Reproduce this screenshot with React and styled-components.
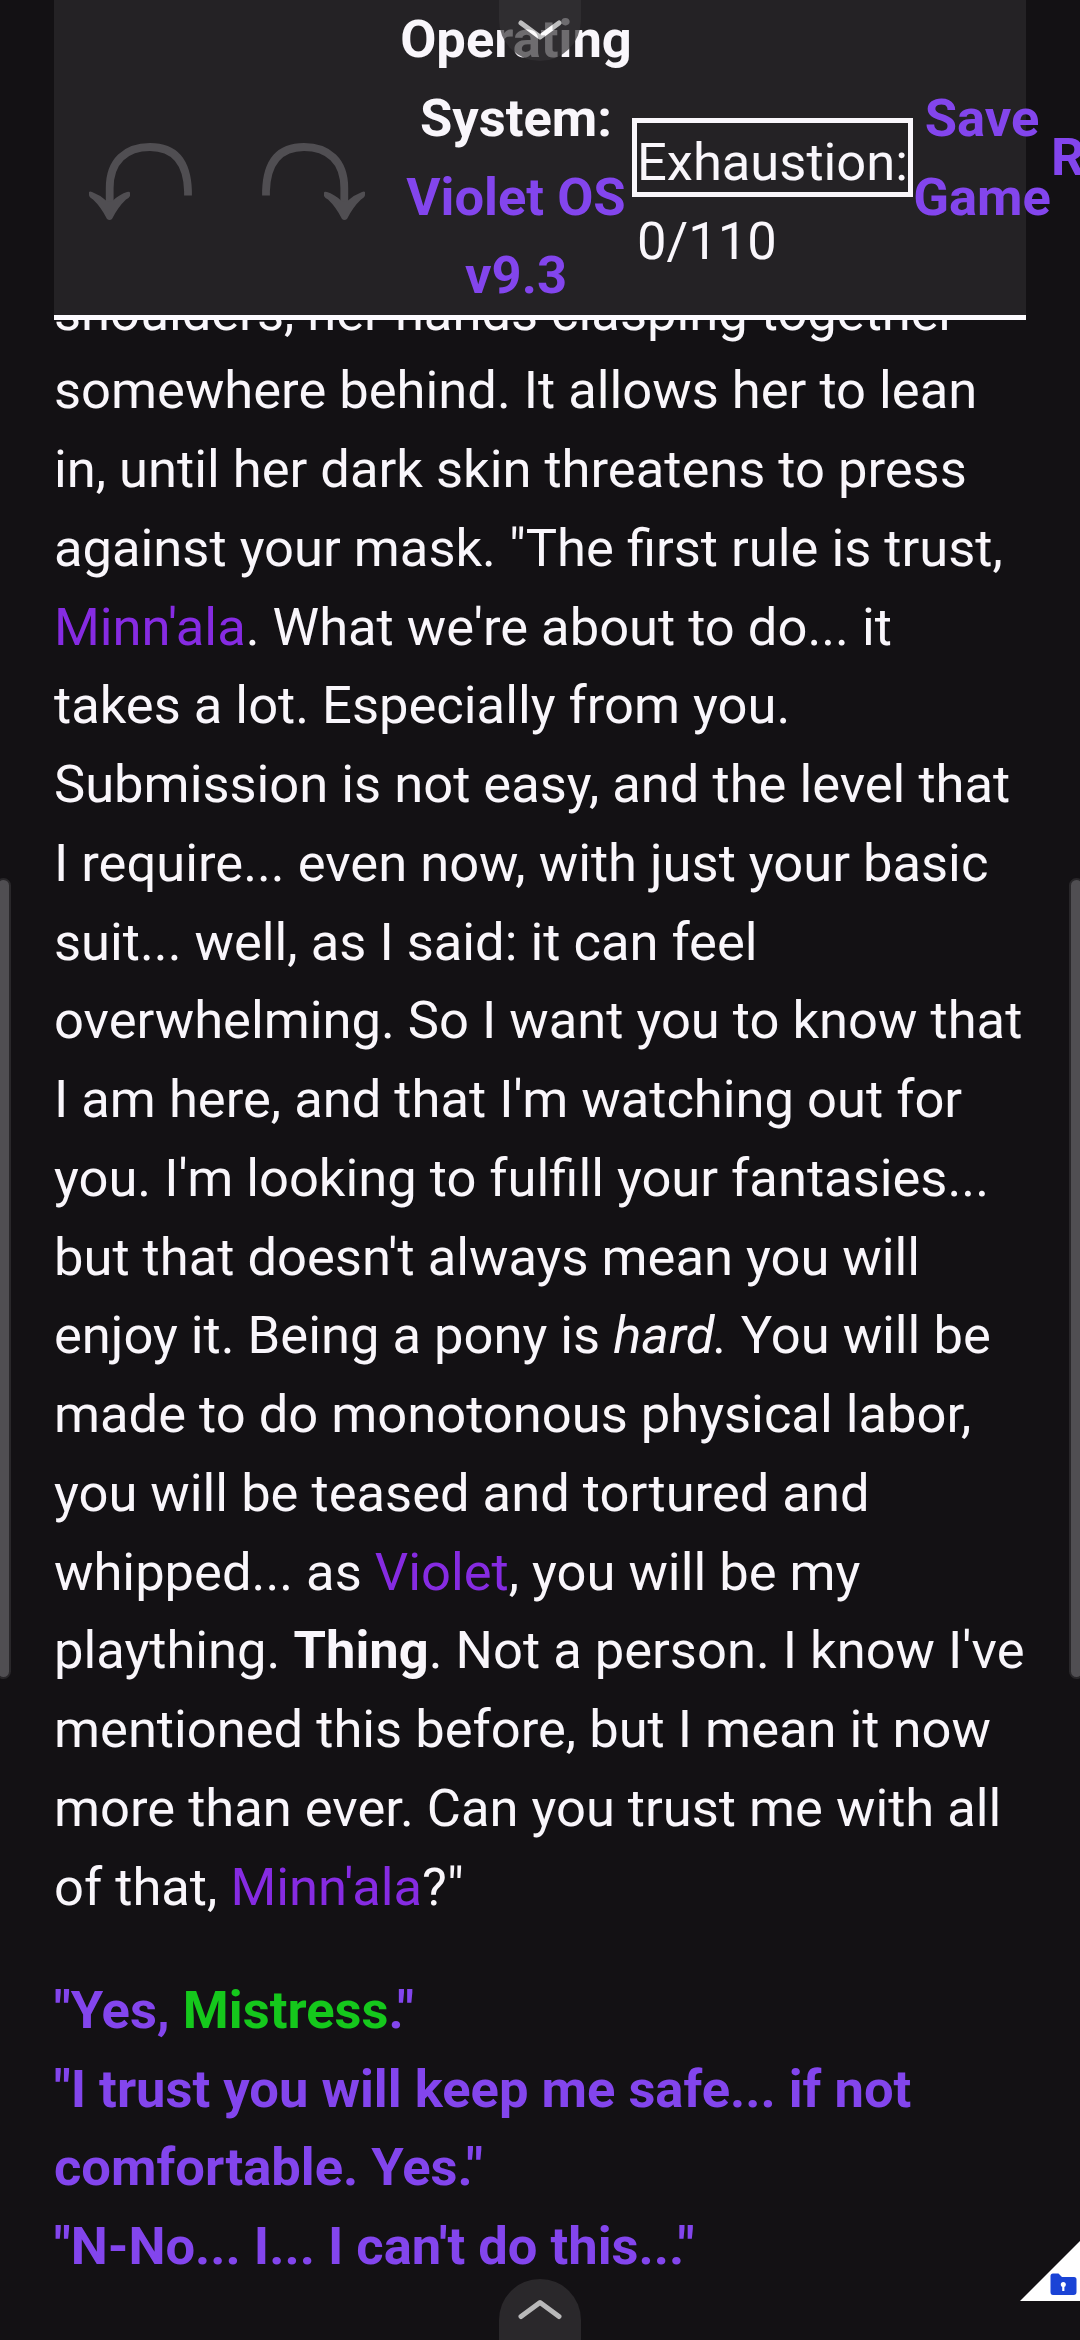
import React from 'react'
import styled, { createGlobalStyle } from 'styled-components'

const App = () => {
   return (
      <>
         <GlobalStyle />
         <ScreenStyled>
            <Header>
               <History>
                  <ArrowIcon />
                  <ArrowIcon $flip />
               </History>
               <SystemTitle>
                  Operating System: <Link>Violet OS v9.3</Link>
               </SystemTitle>
               <Meter>Exhaustion: 0/110</Meter>
               <HeaderLink $width="138px">Save Game</HeaderLink>
               <HeaderLink>Restart</HeaderLink>
            </Header>
            <Story>
               <p>
                  shoulders, her hands clasping together<br />
                  somewhere behind. It allows her to lean<br />
                  in, until her dark skin threatens to press<br />
                  against your mask. "The first rule is trust,<br />
                  <Name>Minn'ala</Name>. What we're about to do... it<br />
                  takes a lot. Especially from you.<br />
                  Submission is not easy, and the level that<br />
                  I require... even now, with just your basic<br />
                  suit... well, as I said: it can feel<br />
                  overwhelming. So I want you to know that<br />
                  I am here, and that I'm watching out for<br />
                  you. I'm looking to fulfill your fantasies...<br />
                  but that doesn't always mean you will<br />
                  enjoy it. Being a pony is <em>hard.</em> You will be<br />
                  made to do monotonous physical labor,<br />
                  you will be teased and tortured and<br />
                  whipped... as <Name>Violet</Name>, you will be my<br />
                  plaything. <strong>Thing</strong>. Not a person. I know I've<br />
                  mentioned this before, but I mean it now<br />
                  more than ever. Can you trust me with all<br />
                  of that, <Name>Minn'ala</Name>?"
               </p>
               <Choices>
                  <Link>"Yes, <Mistress>Mistress</Mistress>."</Link>
                  <Link>"I trust you will keep me safe... if not<br />comfortable. Yes."</Link>
                  <Link>"N-No... I... I can't do this..."</Link>
               </Choices>
            </Story>
            <EdgeHandle $side="left" />
            <EdgeHandle $side="right" />
            <PullTab $edge="top">
               <Chevron d="M22 23 L41 37 L60 23" />
            </PullTab>
            <PullTab $edge="bottom">
               <Chevron d="M22 37.5 L41 23.5 L60 37.5" />
            </PullTab>
            <FolderCorner />
         </ScreenStyled>
      </>
   )
}

const ArrowIcon = ({ $flip }) => (
   <Arrow $flip={$flip} viewBox="0 0 103 77">
      <path
         d="M99 52.5 V48 C98 17 84 4 61 4 C37 4 20.7 18 20.7 45 V62"
         fill="none"
         stroke="#504e52"
         strokeWidth="7.8"
      />
      <path
         d="M0 49 Q1 48 3 49 Q11 52 17 57.5 L20.7 59 L24 57.5 Q31 51 38 49 Q41 48 41 50 V53 Q40 55 37 56.5 Q29 64 23 76 Q20.7 78 18 76 Q12 64 4 56.5 Q0 54 0 52 Z"
         fill="#504e52"
      />
   </Arrow>
)

const Chevron = ({ d }) => (
   <svg width="82" height="61" viewBox="0 0 82 61">
      <path d={d} fill="none" stroke="#fff" strokeWidth="5" strokeLinecap="round" strokeLinejoin="round" />
   </svg>
)

const FolderCorner = () => (
   <Corner viewBox="0 0 60 60">
      <path d="M60 0 V60 H0 Z" fill="#fff" />
      <path d="M33 32.5 H38.5 L42 36 H54 Q56.5 36 56.5 38.5 V51 Q56.5 54 53.5 54 H33 Q30.500 54 30.5 51 V35 Q30.5 32.5 33 32.5 Z" fill="#1a43d6" />
      <circle cx="43.3" cy="43.5" r="2.5" fill="#fff" />
      <path d="M43.3 44 V50" stroke="#fff" strokeWidth="2.2" />
   </Corner>
)

const GlobalStyle = createGlobalStyle`
   *{
      box-sizing: border-box;
   }
   body{
      margin: 0;
      background: #131114;
   }
`

const ScreenStyled = styled.div`
   position: relative;
   width: 1080px;
   height: 2340px;
   padding: 0 54px;
   overflow: hidden;
   background: #131114;
   color: #f9f6fb;
   font-family: Roboto, sans-serif;
   font-size: 52.5px;
   line-height: 78.75px;
`

const Header = styled.header`
   position: relative;
   z-index: 1;
   display: flex;
   align-items: center;
   height: 320px;
   background: #242225;
   border-bottom: 5px solid #fdfbff;
`

const History = styled.div`
   flex: none;
   align-self: flex-start;
   display: flex;
   gap: 70px;
   width: 346px;
   padding: 143px 0 0 35px;
`

const Arrow = styled.svg`
   flex: none;
   width: 103px;
   height: 77px;
   transform: ${({ $flip }) => ($flip ? 'scaleX(-1)' : 'none')};
`

const Link = styled.a`
   color: #8345ed;
   font-weight: 700;
`

const SystemTitle = styled.div`
   flex: none;
   width: 232px;
   text-align: center;
   font-weight: 700;
`

const Meter = styled.div`
   flex: none;
   width: 281px;
   height: 79px;
   border: 5px solid #f9f6fb;
`

const HeaderLink = styled(Link)`
   flex: none;
   width: ${({ $width }) => $width || 'auto'};
   text-align: center;
`

const Story = styled.main`
   margin-top: -47.3px;
   white-space: nowrap;

   p{
      margin: 0;
   }
   strong{
      font-weight: 700;
   }
`

const Name = styled.span`
   color: #862be2;
`

const Mistress = styled.span`
   color: #15c81c;
`

const Choices = styled.div`
   display: flex;
   flex-direction: column;
   margin-top: 44.3px;
`

const EdgeHandle = styled.div`
   position: absolute;
   top: 878px;
   ${({ $side }) => $side}: -4px;
   width: 15px;
   height: 801px;
   border: 2px solid #29272a;
   border-radius: 8px;
   background: #504e52;
`

const PullTab = styled.div`
   position: absolute;
   z-index: 2;
   ${({ $edge }) => $edge}: 0;
   left: 499px;
   width: 82px;
   height: 61px;
   border-radius: ${({ $edge }) => ($edge === 'top' ? '0 0 41px 41px' : '41px 41px 0 0')};
   background: #343235;
   opacity: 0.7;

   svg{
      display: block;
   }
`

const Corner = styled.svg`
   position: absolute;
   right: 0;
   bottom: 39px;
   width: 60px;
   height: 60px;
`

export default App
